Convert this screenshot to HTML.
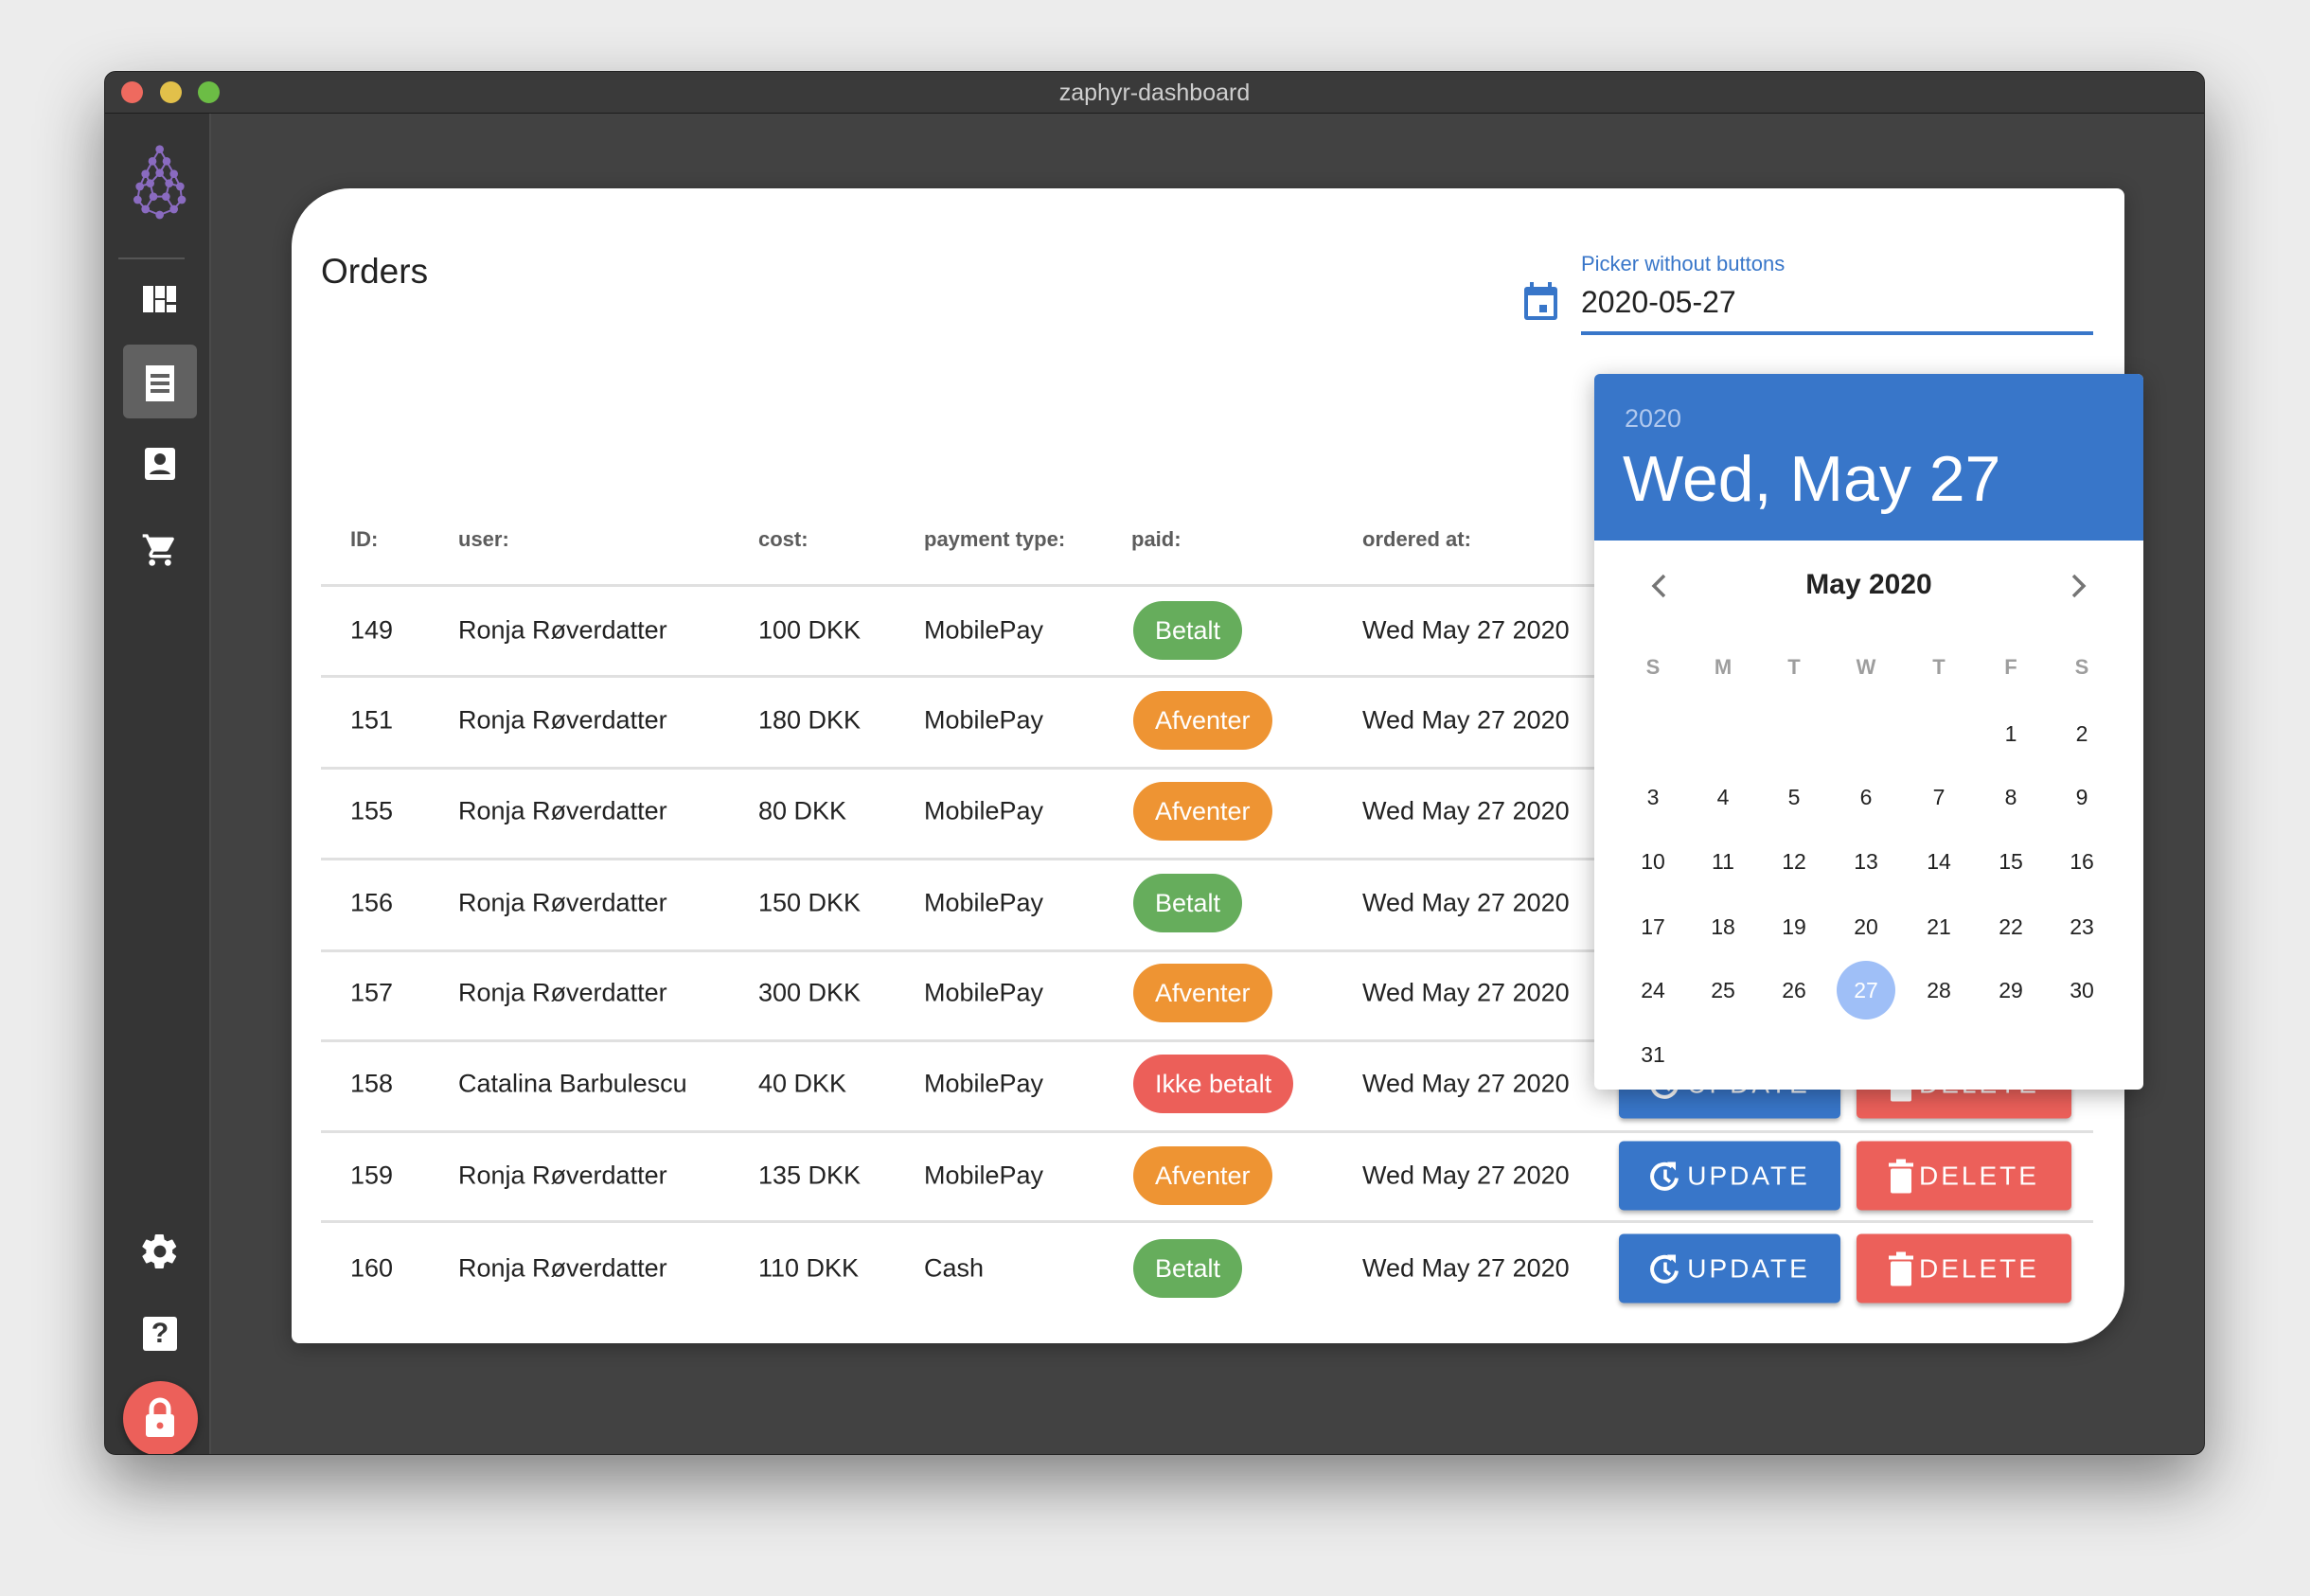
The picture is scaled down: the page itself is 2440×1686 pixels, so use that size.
<!DOCTYPE html>
<html><head><meta charset="utf-8">
<style>
*{margin:0;padding:0;box-sizing:border-box}
body{width:2440px;height:1686px;background:#ececec;font-family:"Liberation Sans",sans-serif;position:relative;overflow:hidden}
.a{position:absolute}
.win{left:110px;top:75px;width:2219px;height:1462px;background:#424242;border-radius:12px;box-shadow:0 30px 70px rgba(0,0,0,.45);overflow:hidden;border:1px solid #222}
.tb{left:0;top:0;width:100%;height:44px;background:#3a3a3a;border-bottom:1px solid #1e1e1e}
.dot{width:23px;height:23px;border-radius:50%;top:10px}
.side{left:0;top:44px;width:112px;height:1418px;background:#353535;border-right:2px solid #4a4a4a}
.card{left:308px;top:199px;width:1936px;height:1220px;background:#fff;border-radius:62px 8px 62px 8px;box-shadow:0 4px 20px rgba(0,0,0,.3)}
.hd{font-size:22px;font-weight:bold;color:#5c5c5c;top:557px}
.line{left:339px;width:1872px;height:3px;background:#e0e0e0}
.cell{font-size:27px;color:#222;transform:translateY(-50%)}
.chip{height:62px;border-radius:31px;color:#fff;font-size:27px;line-height:62px;padding:0 23px;transform:translateY(-50%)}
.btn{height:73px;border-radius:5px;color:#fff;font-size:28px;letter-spacing:3px;line-height:73px;transform:translateY(-50%);box-shadow:0 3px 5px rgba(0,0,0,.3);display:flex;align-items:center;justify-content:center;gap:6px}
.up{left:1710px;width:234px;background:#3876c9}
.del{left:1961px;width:227px;background:#ec605a}
.pop{left:1684px;top:395px;width:580px;height:756px;background:#fff;border-radius:6px;box-shadow:0 6px 24px rgba(0,0,0,.3);overflow:hidden;z-index:5}
.dh{font-size:22px;color:#9e9e9e;font-weight:bold;width:60px;text-align:center;transform:translate(-50%,-50%)}
.dn{font-size:23px;color:#222;width:62px;height:62px;line-height:62px;text-align:center;transform:translate(-50%,-50%);border-radius:50%}
</style></head><body>
<div class="a win">
 <div class="a tb">
  <div class="a dot" style="left:17px;background:#ee6a5f"></div>
  <div class="a dot" style="left:58px;background:#e2c04a"></div>
  <div class="a dot" style="left:98px;background:#6cbd45"></div>
  <div class="a" style="left:0;width:100%;top:8px;text-align:center;font-size:25px;color:#cfcfcf">zaphyr-dashboard</div>
 </div>
 <div class="a side">
  <svg class="a" style="left:20px;top:21px" width="80" height="100" viewBox="0 0 240 300">
   <g stroke="#8a6bc0" stroke-width="6" fill="none">
    <path d="M113 50L90 88L68 128L50 168L43 210L68 240L113 258L158 240L183 210L178 168L158 128L135 88L113 50M90 88L113 125L135 88M113 125L83 158L93 200L133 200L143 158L113 125M68 128L83 158M158 128L143 158M50 168L83 158M178 168L143 158M93 200L68 240M133 200L158 240M43 210L68 240"/>
   </g>
   <g fill="#8a6bc0">
    <circle cx="113" cy="50" r="13"/><circle cx="90" cy="88" r="13"/><circle cx="135" cy="88" r="13"/><circle cx="68" cy="128" r="13"/><circle cx="113" cy="125" r="13"/><circle cx="158" cy="128" r="13"/><circle cx="83" cy="158" r="13"/><circle cx="143" cy="158" r="13"/><circle cx="50" cy="168" r="13"/><circle cx="178" cy="168" r="13"/><circle cx="93" cy="200" r="13"/><circle cx="133" cy="200" r="13"/><circle cx="43" cy="210" r="13"/><circle cx="183" cy="210" r="13"/><circle cx="68" cy="240" r="13"/><circle cx="158" cy="240" r="13"/><circle cx="113" cy="258" r="13"/>
   </g>
  </svg>
  <div class="a" style="left:14px;top:152px;width:70px;height:2px;background:#555"></div>
  <svg class="a" style="left:40px;top:182px" width="36" height="30" viewBox="0 0 36 30" fill="#fff"><rect x="0" y="0" width="11" height="28"/><rect x="13" y="0" width="10" height="13"/><rect x="13" y="15" width="10" height="13"/><rect x="25" y="0" width="10" height="17"/><rect x="25" y="20" width="10" height="8"/></svg>
  <div class="a" style="left:19px;top:244px;width:78px;height:78px;background:#616161;border-radius:6px"></div>
  <svg class="a" style="left:41px;top:264px" width="34" height="42" viewBox="0 0 34 42"><path d="M2 2h30v38H2z" fill="#fff"/><g fill="#616161"><rect x="7" y="11" width="20" height="4"/><rect x="7" y="19" width="20" height="4"/><rect x="7" y="27" width="20" height="4"/></g></svg>
  <svg class="a" style="left:41px;top:352px" width="34" height="36" viewBox="0 0 34 36"><rect x="1" y="1" width="32" height="34" rx="3" fill="#fff"/><circle cx="17" cy="13" r="6" fill="#353535"/><path d="M6 29c2-6 20-6 22 0z" fill="#353535"/></svg>
  <svg class="a" style="left:37px;top:441px" width="42" height="40" viewBox="0 0 24 24" fill="#fff"><path d="M7 18c-1.1 0-2 .9-2 2s.9 2 2 2 2-.9 2-2-.9-2-2-2zM1 2v2h2l3.6 7.6-1.4 2.4c-.1.3-.2.6-.2 1 0 1.1.9 2 2 2h12v-2H7.4c-.1 0-.2-.1-.2-.2v-.1l.9-1.7h7.4c.8 0 1.4-.4 1.7-1l3.6-6.5c.1-.2.1-.3.1-.5 0-.6-.4-1-1-1H5.2l-.9-2H1zm16 16c-1.1 0-2 .9-2 2s.9 2 2 2 2-.9 2-2-.9-2-2-2z"/></svg>
  <svg class="a" style="left:36px;top:1180px" width="44" height="44" viewBox="0 0 24 24" fill="#fff"><path d="M19.1 12.9c0-.3.1-.6.1-.9s0-.6-.1-.9l2.1-1.6c.2-.1.2-.4.1-.6l-2-3.5c-.1-.2-.4-.3-.6-.2l-2.5 1c-.5-.4-1.1-.7-1.700-1l-.4-2.6c0-.2-.2-.4-.5-.4h-4c-.2 0-.4.2-.5.4l-.4 2.6c-.6.3-1.2.6-1.7 1l-2.5-1c-.2-.1-.5 0-.6.2l-2 3.5c-.1.2-.1.5.1.6l2.1 1.6c0 .3-.1.6-.1.9s0 .6.1.9l-2.1 1.6c-.2.1-.2.4-.1.6l2 3.5c.1.2.4.3.6.2l2.5-1c.5.4 1.1.7 1.7 1l.4 2.6c0 .2.2.4.5.4h4c.2 0 .4-.2.5-.4l.4-2.6c.6-.3 1.2-.6 1.7-1l2.5 1c.2.1.5 0 .6-.2l2-3.5c.1-.2.1-.5-.1-.6l-2.1-1.6zM12 15.5c-1.9 0-3.5-1.6-3.5-3.5s1.6-3.5 3.5-3.5 3.5 1.6 3.5 3.5-1.6 3.5-3.5 3.5z"/></svg>
  <div class="a" style="left:40px;top:1271px;width:36px;height:36px;background:#fff;border-radius:3px;color:#353535;font-weight:bold;font-size:30px;text-align:center;line-height:36px">?</div>
  <div class="a" style="left:19px;top:1339px;width:79px;height:79px;border-radius:50%;background:#ec605a;box-shadow:0 3px 8px rgba(0,0,0,.4)"></div>
  <svg class="a" style="left:41px;top:1356px" width="34" height="44" viewBox="0 0 34 44"><path d="M8 18v-6a9 9 0 0 1 18 0v6" stroke="#fff" stroke-width="5" fill="none"/><rect x="2" y="18" width="30" height="24" rx="3" fill="#fff"/><circle cx="17" cy="30" r="3.5" fill="#ec605a"/></svg>
 </div>
</div>

<div class="a card"></div>
<div class="a" style="left:339px;top:266px;font-size:37px;color:#222">Orders</div>
<svg class="a" style="left:1609px;top:297px" width="37" height="42" viewBox="0 0 37 42"><rect x="1" y="6" width="35" height="35" rx="3" fill="#3876c9"/><rect x="5" y="15" width="27" height="22" fill="#fff"/><rect x="7" y="1" width="4" height="8" fill="#3876c9"/><rect x="26" y="1" width="4" height="8" fill="#3876c9"/><rect x="17" y="25" width="8" height="8" fill="#3876c9"/></svg>
<div class="a" style="left:1670px;top:266px;font-size:22px;color:#3876c9">Picker without buttons</div>
<div class="a" style="left:1670px;top:301px;font-size:32px;color:#222">2020-05-27</div>
<div class="a" style="left:1670px;top:350px;width:541px;height:4px;background:#3876c9"></div>

<div class="a hd" style="left:370px">ID:</div>
<div class="a hd" style="left:484px">user:</div>
<div class="a hd" style="left:801px">cost:</div>
<div class="a hd" style="left:976px">payment type:</div>
<div class="a hd" style="left:1195px">paid:</div>
<div class="a hd" style="left:1439px">ordered at:</div>

<div class="a line" style="top:617px"></div>
<div class="a line" style="top:713px"></div>
<div class="a line" style="top:810px"></div>
<div class="a line" style="top:906px"></div>
<div class="a line" style="top:1003px"></div>
<div class="a line" style="top:1098px"></div>
<div class="a line" style="top:1194px"></div>
<div class="a line" style="top:1289px"></div>

<div class="a cell" style="left:370px;top:666px">149</div><div class="a cell" style="left:484px;top:666px">Ronja Røverdatter</div><div class="a cell" style="left:801px;top:666px">100 DKK</div><div class="a cell" style="left:976px;top:666px">MobilePay</div><div class="a chip" style="left:1197px;top:666px;background:#66ad5c">Betalt</div><div class="a cell" style="left:1439px;top:666px">Wed May 27 2020</div>
<div class="a cell" style="left:370px;top:761px">151</div><div class="a cell" style="left:484px;top:761px">Ronja Røverdatter</div><div class="a cell" style="left:801px;top:761px">180 DKK</div><div class="a cell" style="left:976px;top:761px">MobilePay</div><div class="a chip" style="left:1197px;top:761px;background:#ee9433">Afventer</div><div class="a cell" style="left:1439px;top:761px">Wed May 27 2020</div>
<div class="a cell" style="left:370px;top:857px">155</div><div class="a cell" style="left:484px;top:857px">Ronja Røverdatter</div><div class="a cell" style="left:801px;top:857px">80 DKK</div><div class="a cell" style="left:976px;top:857px">MobilePay</div><div class="a chip" style="left:1197px;top:857px;background:#ee9433">Afventer</div><div class="a cell" style="left:1439px;top:857px">Wed May 27 2020</div>
<div class="a cell" style="left:370px;top:954px">156</div><div class="a cell" style="left:484px;top:954px">Ronja Røverdatter</div><div class="a cell" style="left:801px;top:954px">150 DKK</div><div class="a cell" style="left:976px;top:954px">MobilePay</div><div class="a chip" style="left:1197px;top:954px;background:#66ad5c">Betalt</div><div class="a cell" style="left:1439px;top:954px">Wed May 27 2020</div>
<div class="a cell" style="left:370px;top:1049px">157</div><div class="a cell" style="left:484px;top:1049px">Ronja Røverdatter</div><div class="a cell" style="left:801px;top:1049px">300 DKK</div><div class="a cell" style="left:976px;top:1049px">MobilePay</div><div class="a chip" style="left:1197px;top:1049px;background:#ee9433">Afventer</div><div class="a cell" style="left:1439px;top:1049px">Wed May 27 2020</div>
<div class="a cell" style="left:370px;top:1145px">158</div><div class="a cell" style="left:484px;top:1145px">Catalina Barbulescu</div><div class="a cell" style="left:801px;top:1145px">40 DKK</div><div class="a cell" style="left:976px;top:1145px">MobilePay</div><div class="a chip" style="left:1197px;top:1145px;background:#ec5f59">Ikke betalt</div><div class="a cell" style="left:1439px;top:1145px">Wed May 27 2020</div>
<div class="a cell" style="left:370px;top:1242px">159</div><div class="a cell" style="left:484px;top:1242px">Ronja Røverdatter</div><div class="a cell" style="left:801px;top:1242px">135 DKK</div><div class="a cell" style="left:976px;top:1242px">MobilePay</div><div class="a chip" style="left:1197px;top:1242px;background:#ee9433">Afventer</div><div class="a cell" style="left:1439px;top:1242px">Wed May 27 2020</div>
<div class="a cell" style="left:370px;top:1340px">160</div><div class="a cell" style="left:484px;top:1340px">Ronja Røverdatter</div><div class="a cell" style="left:801px;top:1340px">110 DKK</div><div class="a cell" style="left:976px;top:1340px">Cash</div><div class="a chip" style="left:1197px;top:1340px;background:#66ad5c">Betalt</div><div class="a cell" style="left:1439px;top:1340px">Wed May 27 2020</div>

<div class="a btn up" style="top:1145px"><svg width="34" height="36" viewBox="0 0 34 36"><path d="M24 8A13 13 0 1 0 29 20" stroke="#fff" stroke-width="4" fill="none"/><path d="M19 3h9v9z" fill="#fff"/><path d="M17 11v9l5 4" stroke="#fff" stroke-width="3.5" fill="none"/></svg>UPDATE</div>
<div class="a btn del" style="top:1145px"><svg width="26" height="36" viewBox="0 0 26 36" fill="#fff"><rect x="0" y="4" width="26" height="4"/><rect x="8" y="0" width="10" height="4"/><rect x="2" y="10" width="22" height="26" rx="2"/></svg>DELETE</div>
<div class="a btn up" style="top:1242px"><svg width="34" height="36" viewBox="0 0 34 36"><path d="M24 8A13 13 0 1 0 29 20" stroke="#fff" stroke-width="4" fill="none"/><path d="M19 3h9v9z" fill="#fff"/><path d="M17 11v9l5 4" stroke="#fff" stroke-width="3.5" fill="none"/></svg>UPDATE</div>
<div class="a btn del" style="top:1242px"><svg width="26" height="36" viewBox="0 0 26 36" fill="#fff"><rect x="0" y="4" width="26" height="4"/><rect x="8" y="0" width="10" height="4"/><rect x="2" y="10" width="22" height="26" rx="2"/></svg>DELETE</div>
<div class="a btn up" style="top:1340px"><svg width="34" height="36" viewBox="0 0 34 36"><path d="M24 8A13 13 0 1 0 29 20" stroke="#fff" stroke-width="4" fill="none"/><path d="M19 3h9v9z" fill="#fff"/><path d="M17 11v9l5 4" stroke="#fff" stroke-width="3.5" fill="none"/></svg>UPDATE</div>
<div class="a btn del" style="top:1340px"><svg width="26" height="36" viewBox="0 0 26 36" fill="#fff"><rect x="0" y="4" width="26" height="4"/><rect x="8" y="0" width="10" height="4"/><rect x="2" y="10" width="22" height="26" rx="2"/></svg>DELETE</div>

<div class="a pop">
 <div class="a" style="left:0;top:0;width:580px;height:176px;background:#3876c9"></div>
 <div class="a" style="left:32px;top:32px;font-size:27px;color:#b0c8ee">2020</div>
 <div class="a" style="left:30px;top:72px;font-size:68px;color:#fff">Wed, May 27</div>
 <svg class="a" style="left:56px;top:209px" width="24" height="30" viewBox="0 0 24 30"><path d="M18 4L7 15l11 11" stroke="#757575" stroke-width="3.5" fill="none"/></svg>
 <svg class="a" style="left:500px;top:209px" width="24" height="30" viewBox="0 0 24 30"><path d="M6 4l11 11L6 26" stroke="#757575" stroke-width="3.5" fill="none"/></svg>
 <div class="a" style="left:0;width:580px;top:206px;text-align:center;font-size:30px;font-weight:bold;color:#222">May 2020</div>
</div>
<div class="a" style="z-index:6;left:0;top:0;width:0;height:0">
 <div class="a dh" style="left:1746px;top:705px">S</div><div class="a dh" style="left:1820px;top:705px">M</div><div class="a dh" style="left:1895px;top:705px">T</div><div class="a dh" style="left:1971px;top:705px">W</div><div class="a dh" style="left:2048px;top:705px">T</div><div class="a dh" style="left:2124px;top:705px">F</div><div class="a dh" style="left:2199px;top:705px">S</div>
 <div class="a dn" style="left:2124px;top:775px">1</div><div class="a dn" style="left:2199px;top:775px">2</div>
 <div class="a dn" style="left:1746px;top:842px">3</div><div class="a dn" style="left:1820px;top:842px">4</div><div class="a dn" style="left:1895px;top:842px">5</div><div class="a dn" style="left:1971px;top:842px">6</div><div class="a dn" style="left:2048px;top:842px">7</div><div class="a dn" style="left:2124px;top:842px">8</div><div class="a dn" style="left:2199px;top:842px">9</div>
 <div class="a dn" style="left:1746px;top:910px">10</div><div class="a dn" style="left:1820px;top:910px">11</div><div class="a dn" style="left:1895px;top:910px">12</div><div class="a dn" style="left:1971px;top:910px">13</div><div class="a dn" style="left:2048px;top:910px">14</div><div class="a dn" style="left:2124px;top:910px">15</div><div class="a dn" style="left:2199px;top:910px">16</div>
 <div class="a dn" style="left:1746px;top:979px">17</div><div class="a dn" style="left:1820px;top:979px">18</div><div class="a dn" style="left:1895px;top:979px">19</div><div class="a dn" style="left:1971px;top:979px">20</div><div class="a dn" style="left:2048px;top:979px">21</div><div class="a dn" style="left:2124px;top:979px">22</div><div class="a dn" style="left:2199px;top:979px">23</div>
 <div class="a dn" style="left:1746px;top:1046px">24</div><div class="a dn" style="left:1820px;top:1046px">25</div><div class="a dn" style="left:1895px;top:1046px">26</div><div class="a dn" style="left:1971px;top:1046px;background:#9fbff7;color:#fff">27</div><div class="a dn" style="left:2048px;top:1046px">28</div><div class="a dn" style="left:2124px;top:1046px">29</div><div class="a dn" style="left:2199px;top:1046px">30</div>
 <div class="a dn" style="left:1746px;top:1114px">31</div>
</div>
</body></html>
